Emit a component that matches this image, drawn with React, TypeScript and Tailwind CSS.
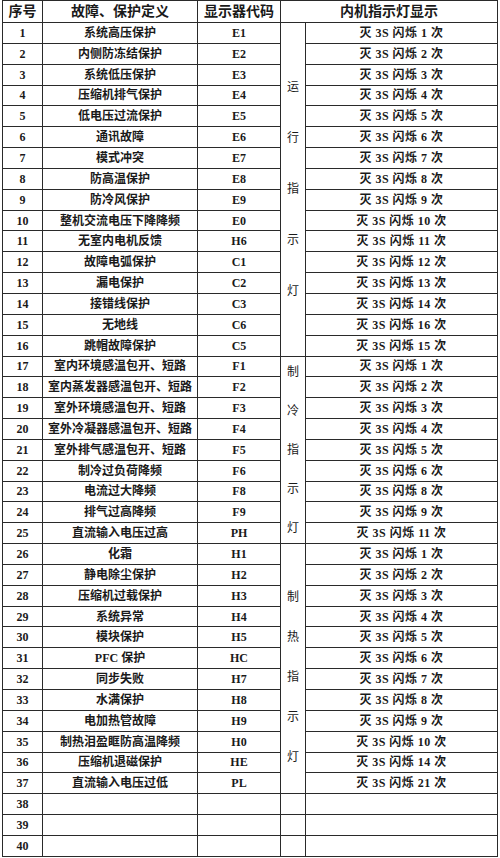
const rows: [string, string, string][] = [
  ["系统高压保护", "E1", "1"],
  ["内侧防冻结保护", "E2", "2"],
  ["系统低压保护", "E3", "3"],
  ["压缩机排气保护", "E4", "4"],
  ["低电压过流保护", "E5", "5"],
  ["通讯故障", "E6", "6"],
  ["模式冲突", "E7", "7"],
  ["防高温保护", "E8", "8"],
  ["防冷风保护", "E9", "9"],
  ["整机交流电压下降降频", "E0", "10"],
  ["无室内电机反馈", "H6", "11"],
  ["故障电弧保护", "C1", "12"],
  ["漏电保护", "C2", "13"],
  ["接错线保护", "C3", "14"],
  ["无地线", "C6", "16"],
  ["跳帽故障保护", "C5", "15"],
  ["室内环境感温包开、短路", "F1", "1"],
  ["室内蒸发器感温包开、短路", "F2", "2"],
  ["室外环境感温包开、短路", "F3", "3"],
  ["室外冷凝器感温包开、短路", "F4", "4"],
  ["室外排气感温包开、短路", "F5", "5"],
  ["制冷过负荷降频", "F6", "6"],
  ["电流过大降频", "F8", "8"],
  ["排气过高降频", "F9", "9"],
  ["直流输入电压过高", "PH", "11"],
  ["化霜", "H1", "1"],
  ["静电除尘保护", "H2", "2"],
  ["压缩机过载保护", "H3", "3"],
  ["系统异常", "H4", "4"],
  ["模块保护", "H5", "5"],
  ["PFC 保护", "HC", "6"],
  ["同步失败", "H7", "7"],
  ["水满保护", "H8", "8"],
  ["电加热管故障", "H9", "9"],
  ["制热泪盈眶防高温降频", "H0", "10"],
  ["压缩机退磁保护", "HE", "14"],
  ["直流输入电压过低", "PL", "21"],
];

// group label cells: start row index -> rowSpan, text, spacing
const groups: Record<number, { span: number; label: string; cls: string }> = {
  0: { span: 16, label: "运行指示灯", cls: "gap-[33px]" },
  16: { span: 9, label: "制冷指示灯", cls: "gap-[21px]" },
  25: { span: 12, label: "制热指示灯", cls: "gap-[22px] pt-[16px]" },
};

const cell = "border border-[#2a2a2a] text-center align-middle p-0";

export default function App() {
  return (
    <div
      className="w-[500px] h-[858px] bg-white text-[#1a1a1a] overflow-hidden"
      style={{ fontFamily: '"Liberation Serif", "Noto Sans CJK SC", serif' }}
    >
      <table className="ml-[2px] w-[496px] table-fixed border-collapse">
        <colgroup>
          <col className="w-[40px]" />
          <col className="w-[155px]" />
          <col className="w-[83px]" />
          <col className="w-[25px]" />
          <col />
        </colgroup>
        <thead>
          <tr className="h-[22px] text-[14px] font-bold">
            <th className={cell}>序号</th>
            <th className={cell}>故障、保护定义</th>
            <th className={cell}>显示器代码</th>
            <th className={cell} colSpan={2}>
              内机指示灯显示
            </th>
          </tr>
        </thead>
        <tbody className="text-[12px] font-bold">
          {Array.from({ length: 40 }).map((_, i) => {
            const r = rows[i];
            const g = groups[i];
            return (
              <tr key={i} className="h-[20.85px]">
                <td className={cell}>{i + 1}</td>
                <td className={cell}>{r ? r[0] : ""}</td>
                <td className={cell}>{r ? r[1] : ""}</td>
                {g && (
                  <td className={cell} rowSpan={g.span}>
                    <div className={`flex flex-col items-center font-normal text-[12px] ${g.cls}`}>
                      {g.label.split("").map((ch, k) => (
                        <span key={k}>{ch}</span>
                      ))}
                    </div>
                  </td>
                )}
                {i >= 37 && <td className={cell}></td>}
                <td className={cell}>
                  {r ? (
                    <span className="tracking-[0.5px]">
                      灭 3S 闪烁 {r[2]} 次
                    </span>
                  ) : (
                    ""
                  )}
                </td>
              </tr>
            );
          })}
        </tbody>
      </table>
    </div>
  );
}
